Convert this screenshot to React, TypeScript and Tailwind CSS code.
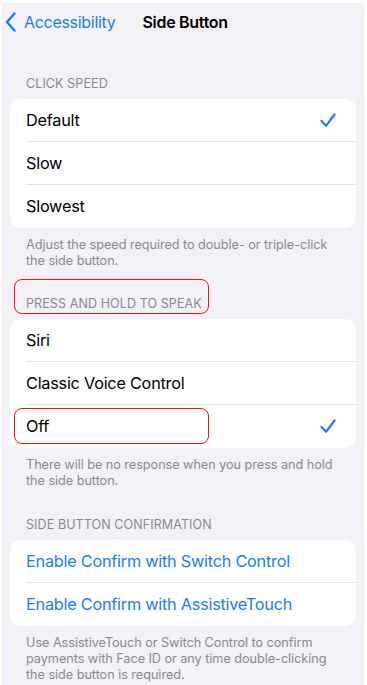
import React from 'react';

const Check = () => (
  <svg width="16" height="15" viewBox="0 0 16 15" fill="none">
    <path d="M1.5 8 L6 12.8 L14.5 1.5" stroke="#1a7cf5" strokeWidth="2.2" strokeLinecap="round" strokeLinejoin="round" />
  </svg>
);

const Row = ({ label, checked, blue, last }: any) => (
  <div className="flex h-[43px] items-center pl-4">
    <div className={`flex h-full flex-1 items-center pr-5 ${last ? '' : 'border-b border-[#e2e2e7]'}`}>
      <span className={`flex-1 text-[16.3px] tracking-[-0.25px] ${blue ? 'text-[#1a7cf5]' : 'text-black'}`}>{label}</span>
      {checked && <Check />}
    </div>
  </div>
);

const Section = ({ title, rows, footer, boxHeader, boxRow, className }: any) => (
  <div className={`relative ${className || ''}`}>
    <div className="pl-[24px] text-[12.5px] leading-4 tracking-[0.1px] text-[#8a8a8e]">{title}</div>
    <div className="mx-2 mt-[7px] overflow-hidden rounded-[10px] bg-white">
      {rows.map((r: any, i: number) => (
        <Row key={r.label} {...r} last={i === rows.length - 1} />
      ))}
    </div>
    <div className="mt-[9px] pl-[24px] pr-6 text-[12.7px] leading-4 tracking-[-0.05px] text-[#8a8a8e]">{footer}</div>
    {boxHeader && <div className="absolute left-[12px] top-[-17px] h-[35px] w-[195px] rounded-[8px] border-[1.5px] border-[#e8141c]" />}
    {boxRow && <div className="absolute left-[12px] top-[112px] h-[36px] w-[195px] rounded-[8px] border-[1.5px] border-[#e8141c]" />}
  </div>
);

export default function App() {
  return (
    <div className="h-[685px] w-[367px] overflow-hidden bg-white" style={{ fontFamily: 'Inter, "Liberation Sans", sans-serif' }}>
      <div className="ml-[2px] mr-[3px] mt-[3px] h-[682px] bg-[#f2f2f7]">
        <div className="flex h-[38px] items-center">
          <svg width="12" height="20" viewBox="0 0 12 20" fill="none" className="ml-[3px]">
            <path d="M9.5 1.5 L2 10 L9.5 18.5" stroke="#1a7cf5" strokeWidth="2.4" strokeLinecap="round" strokeLinejoin="round" />
          </svg>
          <span className="ml-[7px] text-[16px] tracking-[-0.3px] text-[#1a7cf5]">Accessibility</span>
          <span className="ml-[27px] text-[16px] font-semibold tracking-[-0.3px] text-black">Side Button</span>
        </div>
        <div className="mt-[35px] flex flex-col">
          <Section
            title="CLICK SPEED"
            rows={[{ label: 'Default', checked: true }, { label: 'Slow' }, { label: 'Slowest' }]}
            footer="Adjust the speed required to double- or triple-click the side button."
          />
          <Section
            className="mt-[27px]"
            title="PRESS AND HOLD TO SPEAK"
            rows={[{ label: 'Siri' }, { label: 'Classic Voice Control' }, { label: 'Off', checked: true }]}
            footer="There will be no response when you press and hold the side button."
            boxHeader
            boxRow
          />
          <Section
            className="mt-[28px]"
            title="SIDE BUTTON CONFIRMATION"
            rows={[{ label: 'Enable Confirm with Switch Control', blue: true }, { label: 'Enable Confirm with AssistiveTouch', blue: true }]}
            footer="Use AssistiveTouch or Switch Control to confirm payments with Face ID or any time double-clicking the side button is required."
          />
        </div>
      </div>
    </div>
  );
}
